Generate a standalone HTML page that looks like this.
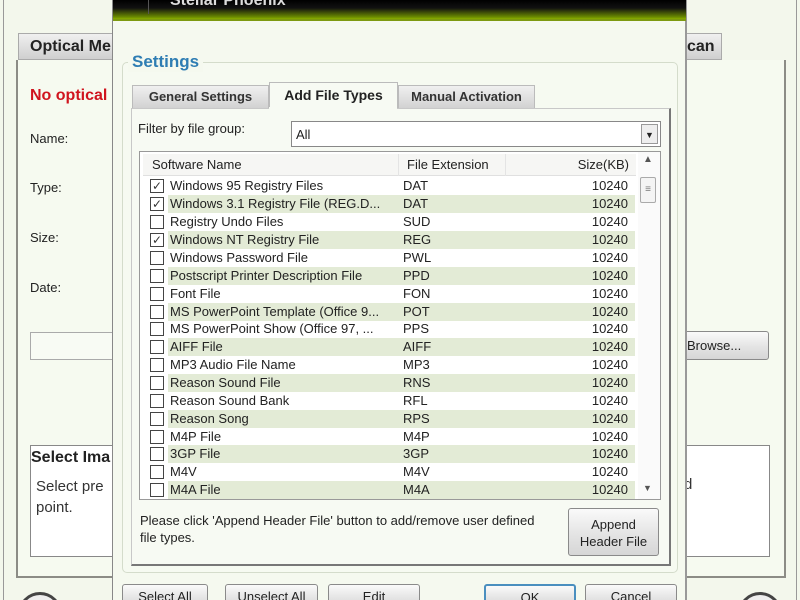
<!DOCTYPE html>
<html style="width:800px;height:600px;overflow:hidden"><head><meta charset="utf-8"><style>
*{box-sizing:border-box;margin:0;padding:0}
body{width:800px;height:600px;overflow:hidden;background:#f3f7ec;font-family:"Liberation Sans",sans-serif;position:relative;color:#222}
.a{position:absolute}
.btn{position:absolute;border:1px solid #8a8a8a;border-radius:3px;background:linear-gradient(#fafafa,#e4e4e4 55%,#d6d6d6);font-size:13px;text-align:center;color:#222}
.row{position:absolute;left:0;width:492px;height:18px;font-size:13px;line-height:18px}
.row.g .bg{background:#e3ebd6}
.cb{position:absolute;left:8px;top:2px;width:14px;height:14px;border:1px solid #444;background:#fff;font-size:12px;line-height:12px;text-align:center;color:#333}
</style></head><body>
<div class="a" style="left:0;top:0;width:800px;height:600px;overflow:hidden">
<div class="a" style="left:3px;top:0;width:1px;height:600px;background:#999"></div>
<div class="a" style="left:796px;top:0;width:1px;height:600px;background:#999"></div>
<div class="a" style="left:16px;top:60px;width:770px;height:518px;border:2px solid #8c8c86;border-top:none;background:#f6faf0"></div>
<div class="a" style="left:18px;top:33px;width:100px;height:27px;background:linear-gradient(#f0f0f0,#cfcfcf);border:1px solid #aaa;font-weight:bold;font-size:16px;padding:4px 0 0 11px">Optical Me</div>
<div class="a" style="left:684px;top:33px;width:38px;height:27px;background:linear-gradient(#f0f0f0,#cfcfcf);border:1px solid #aaa;font-weight:bold;font-size:16px;padding:4px 0 0 2px">can</div>
<div class="a" style="left:30px;top:87px;font-weight:bold;font-size:16px;color:#d0141e">No optical</div>
<div class="a" style="left:30px;top:131px;font-size:13px">Name:</div>
<div class="a" style="left:30px;top:180px;font-size:13px">Type:</div>
<div class="a" style="left:30px;top:230px;font-size:13px">Size:</div>
<div class="a" style="left:30px;top:280px;font-size:13px">Date:</div>
<div class="a" style="left:30px;top:332px;width:90px;height:28px;border:1px solid #aaa;background:#f8fbf4"></div>
<div class="btn" style="left:680px;top:331px;width:89px;height:29px;line-height:27px;padding-left:6px;text-align:left">Browse...</div>
<div class="a" style="left:30px;top:445px;width:740px;height:112px;border:1px solid #888;background:#fff"></div>
<div class="a" style="left:31px;top:449px;font-weight:bold;font-size:16px">Select Ima</div>
<div class="a" style="left:36px;top:476px;font-size:15px;line-height:21px;color:#333">Select pre<br>point.</div>
<div class="a" style="left:684px;top:476px;font-size:15px;color:#333">d</div>
<div class="a" style="left:18px;top:592px;width:44px;height:44px;border-radius:50%;border:3px solid #444;background:#eee"></div>
<div class="a" style="left:738px;top:592px;width:44px;height:44px;border-radius:50%;border:3px solid #444;background:#eee"></div>
<div class="a" style="left:112px;top:0;width:575px;height:600px;background:#f5f9ef;border-left:1px solid #888;border-right:2px solid #999"></div>
<div class="a" style="left:113px;top:0;width:573px;height:20px;background:linear-gradient(#000 0%,#111 40%,#6a8a00 85%,#9ac000 100%)"></div>
<div class="a" style="left:113px;top:19px;width:573px;height:2px;background:#7d9a10"></div>
<div class="a" style="left:148px;top:0;width:1px;height:14px;background:#555"></div>
<div class="a" style="left:170px;top:-8px;color:#ddd;font-size:16px;font-weight:bold">Stellar Phoenix</div>
<div class="a" style="left:122px;top:62px;width:556px;height:511px;border:1px solid #d4dccb;border-radius:5px;background:#f6faf1"></div>
<div class="a" style="left:128px;top:52px;padding:0 4px;background:#f5f9ef;color:#2e7db3;font-weight:bold;font-size:17px">Settings</div>
<div class="a" style="left:132px;top:85px;width:137px;height:24px;background:linear-gradient(#f0f0f0,#d2d2d2);border:1px solid #bbb;font-weight:bold;font-size:13px;line-height:22px;text-align:center;color:#333">General Settings</div>
<div class="a" style="left:269px;top:82px;width:129px;height:27px;background:#f7faf3;border:1px solid #bbb;border-bottom:none;font-weight:bold;font-size:14px;line-height:25px;text-align:center">Add File Types</div>
<div class="a" style="left:398px;top:85px;width:137px;height:24px;background:linear-gradient(#f0f0f0,#d2d2d2);border:1px solid #bbb;font-weight:bold;font-size:13px;line-height:22px;text-align:center;color:#333">Manual Activation</div>
<div class="a" style="left:131px;top:108px;width:540px;height:458px;border:1px solid #c8c8c8;border-right:2px solid #777;border-bottom:2px solid #777;background:#f7faf3"></div>
<div class="a" style="left:269px;top:107px;width:128px;height:3px;background:#f7faf3"></div>
<div class="a" style="left:138px;top:121px;font-size:13px">Filter by file group:</div>
<div class="a" style="left:291px;top:121px;width:370px;height:26px;border:1px solid #888;background:#fff;font-size:13px;padding:5px 0 0 4px">All</div>
<div class="a" style="left:641px;top:124px;width:17px;height:20px;border:1px solid #999;background:#eee;font-size:9px;text-align:center;line-height:20px">▼</div>
<div class="a" style="left:139px;top:151px;width:522px;height:349px;border:1px solid #999;background:#fff;overflow:hidden">
 <div class="a" style="left:3px;top:2px;width:493px;height:22px;background:#f6f6f4;border-bottom:1px solid #e0e0e0;font-size:13px;line-height:22px">
  <span class="a" style="left:9px">Software Name</span>
  <span class="a" style="left:255px;width:1px;height:22px;background:#e4e4e4"></span>
  <span class="a" style="left:264px">File Extension</span>
  <span class="a" style="left:362px;width:1px;height:22px;background:#e4e4e4"></span>
  <span class="a" style="right:7px">Size(KB)</span>
 </div>
 <div class="a" style="left:498px;top:0;width:22px;height:347px;background:#fafafa"></div>
 <div class="a" style="left:503px;top:2px;font-size:10px;color:#555">▲</div>
 <div class="a" style="left:500px;top:25px;width:16px;height:26px;border:1px solid #aaa;border-radius:2px;background:#f4f4f4;font-size:10px;text-align:center;line-height:24px;color:#777">≡</div>
 <div class="a" style="left:503px;top:331px;font-size:9px;color:#555">▼</div>
</div>
<div class="a" style="left:140px;top:512px;font-size:13px;line-height:17px;width:405px">Please click 'Append Header File' button to add/remove user defined file types.</div>
<div class="btn" style="left:568px;top:508px;width:91px;height:48px;padding-top:7px;line-height:17px">Append<br>Header File</div>
<div class="btn" style="left:122px;top:584px;width:86px;height:26px;padding-top:4px">Select All</div>
<div class="btn" style="left:225px;top:584px;width:93px;height:26px;padding-top:4px">Unselect All</div>
<div class="btn" style="left:328px;top:584px;width:92px;height:26px;padding-top:4px">Edit</div>
<div class="btn" style="left:484px;top:584px;width:92px;height:26px;padding-top:4px;border:2px solid #4a8fbf">OK</div>
<div class="btn" style="left:585px;top:584px;width:92px;height:26px;padding-top:4px">Cancel</div>
<div class="a" style="left:142px;top:177px;width:493px;height:322px;overflow:hidden">
<div class="row" style="top:0"><div class="cb">✓</div><span class="a" style="left:28px">Windows 95 Registry Files</span><span class="a" style="left:261px">DAT</span><span class="a" style="right:6px">10240</span></div>
<div class="row g" style="top:18px"><div class="a bg" style="left:26px;width:467px;height:18px"></div><div class="cb">✓</div><span class="a" style="left:28px">Windows 3.1 Registry File (REG.D...</span><span class="a" style="left:261px">DAT</span><span class="a" style="right:6px">10240</span></div>
<div class="row" style="top:36px"><div class="cb"></div><span class="a" style="left:28px">Registry Undo Files</span><span class="a" style="left:261px">SUD</span><span class="a" style="right:6px">10240</span></div>
<div class="row g" style="top:54px"><div class="a bg" style="left:26px;width:467px;height:18px"></div><div class="cb">✓</div><span class="a" style="left:28px">Windows NT Registry File</span><span class="a" style="left:261px">REG</span><span class="a" style="right:6px">10240</span></div>
<div class="row" style="top:72px"><div class="cb"></div><span class="a" style="left:28px">Windows Password File</span><span class="a" style="left:261px">PWL</span><span class="a" style="right:6px">10240</span></div>
<div class="row g" style="top:90px"><div class="a bg" style="left:26px;width:467px;height:18px"></div><div class="cb"></div><span class="a" style="left:28px">Postscript Printer Description File</span><span class="a" style="left:261px">PPD</span><span class="a" style="right:6px">10240</span></div>
<div class="row" style="top:108px"><div class="cb"></div><span class="a" style="left:28px">Font File</span><span class="a" style="left:261px">FON</span><span class="a" style="right:6px">10240</span></div>
<div class="row g" style="top:126px"><div class="a bg" style="left:26px;width:467px;height:18px"></div><div class="cb"></div><span class="a" style="left:28px">MS PowerPoint Template (Office 9...</span><span class="a" style="left:261px">POT</span><span class="a" style="right:6px">10240</span></div>
<div class="row" style="top:143px"><div class="cb"></div><span class="a" style="left:28px">MS PowerPoint Show (Office 97, ...</span><span class="a" style="left:261px">PPS</span><span class="a" style="right:6px">10240</span></div>
<div class="row g" style="top:161px"><div class="a bg" style="left:26px;width:467px;height:18px"></div><div class="cb"></div><span class="a" style="left:28px">AIFF File</span><span class="a" style="left:261px">AIFF</span><span class="a" style="right:6px">10240</span></div>
<div class="row" style="top:179px"><div class="cb"></div><span class="a" style="left:28px">MP3 Audio File Name</span><span class="a" style="left:261px">MP3</span><span class="a" style="right:6px">10240</span></div>
<div class="row g" style="top:197px"><div class="a bg" style="left:26px;width:467px;height:18px"></div><div class="cb"></div><span class="a" style="left:28px">Reason Sound File</span><span class="a" style="left:261px">RNS</span><span class="a" style="right:6px">10240</span></div>
<div class="row" style="top:215px"><div class="cb"></div><span class="a" style="left:28px">Reason Sound Bank</span><span class="a" style="left:261px">RFL</span><span class="a" style="right:6px">10240</span></div>
<div class="row g" style="top:233px"><div class="a bg" style="left:26px;width:467px;height:18px"></div><div class="cb"></div><span class="a" style="left:28px">Reason Song</span><span class="a" style="left:261px">RPS</span><span class="a" style="right:6px">10240</span></div>
<div class="row" style="top:251px"><div class="cb"></div><span class="a" style="left:28px">M4P File</span><span class="a" style="left:261px">M4P</span><span class="a" style="right:6px">10240</span></div>
<div class="row g" style="top:268px"><div class="a bg" style="left:26px;width:467px;height:18px"></div><div class="cb"></div><span class="a" style="left:28px">3GP File</span><span class="a" style="left:261px">3GP</span><span class="a" style="right:6px">10240</span></div>
<div class="row" style="top:286px"><div class="cb"></div><span class="a" style="left:28px">M4V</span><span class="a" style="left:261px">M4V</span><span class="a" style="right:6px">10240</span></div>
<div class="row g" style="top:304px"><div class="a bg" style="left:26px;width:467px;height:18px"></div><div class="cb"></div><span class="a" style="left:28px">M4A File</span><span class="a" style="left:261px">M4A</span><span class="a" style="right:6px">10240</span></div>
</div>
</div>
</body></html>
